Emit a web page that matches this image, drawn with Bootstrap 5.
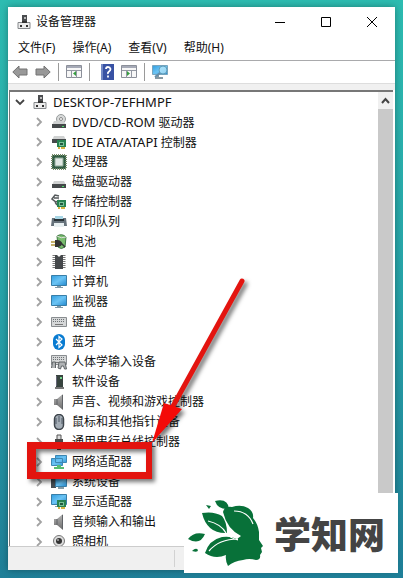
<!DOCTYPE html>
<html lang="zh-CN">
<head>
<meta charset="utf-8">
<meta name="viewport" content="width=device-width, initial-scale=1">
<title>设备管理器</title>
<link href="https://cdn.jsdelivr.net/npm/bootstrap@5.3.0/dist/css/bootstrap.min.css" rel="stylesheet">
<style>
body{font:12px/20px "Noto Sans","Noto Sans CJK SC",sans-serif;color:#111;background:linear-gradient(#2dbcb1,#27a4a9 50%,#1f7f98)}
.desktop{padding:7px 8px 8px}
.win{box-shadow:0 0 7px #0005}
.plain{border:0;background:none;padding:0;color:inherit;line-height:20px}
.titlebar{height:29px;padding-left:8px}
.titlebar h1{font-size:12px;font-weight:400;line-height:20px;margin:0}
.winbtn{width:46px;height:29px}
.menubar{height:25px;padding:0 10px 1px;gap:17px;border-bottom:1px solid #a9aaac}
.tools{height:22px;padding-left:4px;gap:7px}
.tools svg{display:block}
.sep{width:1px;height:18px;background:#9a9a9a}
.strip{height:7px;background:#f0f0f0;border-top:1px solid #ddd}
.treebox{border-top:2px solid #777;border-left:1px solid #777;margin:0 2px 0 1px}
.tree{font-size:12px;overflow:hidden}
.tree ul ul{padding-left:19px}
.item{height:20px;gap:5px;padding-left:3px;white-space:nowrap}
.item svg{flex:none}
.latin{font-size:13px}
.twist{width:14px;height:20px;display:flex;align-items:center;justify-content:center}
.scroll{width:15px;background:#c9c9c9}
.scroll button{height:17px;width:15px;background:#f0f0f0;display:flex;align-items:center;justify-content:center}
.status{height:24px;background:#f0f0f0;border-top:1px solid #ccc}
.status div{width:167px;border-right:1px solid #d2d2d2;height:17px;margin-top:3px}
.marks{left:0;top:0;pointer-events:none;filter:drop-shadow(3px 3px 2px #0008)}
.brand{right:5px;bottom:5px;width:214px;height:80px;padding-left:4px;gap:8px}
.brand strong{font:900 37px/40px "Noto Sans CJK SC",sans-serif;color:#444}
</style>
<script src="https://cdn.jsdelivr.net/npm/bootstrap@5.3.0/dist/js/bootstrap.bundle.min.js"></script>
</head>
<body>
<svg width="0" height="0" class="position-absolute" aria-hidden="true">
<defs>
<linearGradient id="blue" x2="1" y2="1"><stop stop-color="#2f9de0"/><stop offset=".5" stop-color="#6cc4f4"/><stop offset="1" stop-color="#2389cf"/></linearGradient>
<linearGradient id="gray" x2="0" y2="1"><stop stop-color="#b5b5b5"/><stop offset="1" stop-color="#6c6c6c"/></linearGradient>
</defs>
<symbol id="chev" viewBox="0 0 8 10"><path d="M2 1l4 4-4 4" fill="none" stroke="#a2a2a2" stroke-width="1.8"/></symbol>
<symbol id="pc" viewBox="0 0 16 16"><path d="M6 1h5v8H6z" fill="#4b4d50"/><path d="M8 3h2v2H8z" fill="#bbb"/><path d="M2 8.500h12v6H2z" fill="#ececec" stroke="#85888b"/><path d="M4 11h2v2H4zm6 0h2v2h-2zM6 7h5v2H6z" fill="#333"/></symbol>
<symbol id="drive" viewBox="0 0 16 16"><path d="M3 7h10l2 4H1z" fill="#d0d2d2"/><path d="M1 10h14v4H1z" fill="#45494b"/><path d="M11 12h2v1h-2z" fill="#4ddc69"/></symbol>
<symbol id="card" viewBox="0 0 16 16"><path d="M6 6h9v7H6z" fill="#278250"/><path d="M8 8h5v4H8z" fill="#76c297"/><path d="M9 9h3v2H9z" fill="#235a40"/><path d="M7 13h2v2H7zm3 0h4v2h-4z" fill="#d2b443"/></symbol>
<symbol id="monitor" viewBox="0 0 16 16"><path d="M.5 1.500h15v10H.5z" fill="url(#blue)" stroke="#397fa8"/><path d="M6 12h4v1h2v1H4v-1h2z" fill="#829aa7"/></symbol>
<symbol id="keys" viewBox="0 0 16 16"><path d="M.5 3.500h15v9H.5z" fill="#d5d7d8" stroke="#898d90"/><path d="M2 5.500h12M2 7.500h12" stroke="#6d7275" stroke-dasharray="1 1"/><path d="M4 10.500h8" stroke="#777"/></symbol>
<symbol id="speaker" viewBox="0 0 16 16"><path d="M3 5h3l6-5v16l-6-5H3z" fill="url(#gray)"/><path d="M6 5v6M11.500 1v14" stroke="#606367"/></symbol>
<symbol id="panel" viewBox="0 0 16 14"><path d="M.5.500h15v12H.5z" fill="#f7f7f7" stroke="#8b8f99"/><path d="M1 1h14v2H1z" fill="#a6aab7"/><path d="M1 5.500h14M5.500 5v8M10.500 5v8" stroke="#9498a3"/></symbol>
</svg>
<div class="desktop position-relative vh-100 d-flex flex-column">
<main class="win bg-white d-flex flex-column flex-grow-1 overflow-hidden">
<header class="titlebar d-flex align-items-center justify-content-between flex-shrink-0">
<div class="d-flex align-items-center gap-1"><svg width="16" height="16"><use href="#pc"/></svg><h1>设备管理器</h1></div>
<div class="d-flex">
<button class="plain winbtn" aria-label="最小化"><svg width="10" height="10"><path d="M0 5.500h10" stroke="#000"/></svg></button><button class="plain winbtn" aria-label="最大化"><svg width="10" height="10"><path d="M.5.500h9v9h-9z" fill="none" stroke="#000"/></svg></button><button class="plain winbtn" aria-label="关闭"><svg width="10" height="10"><path d="M0 0l10 10M10 0L0 10" stroke="#000"/></svg></button>
</div>
</header>
<nav class="menubar d-flex align-items-center flex-shrink-0"><button class="plain">文件(F)</button><button class="plain">操作(A)</button><button class="plain">查看(V)</button><button class="plain">帮助(H)</button></nav>
<div class="tools d-flex align-items-center flex-shrink-0">
<button class="plain" aria-label="后退"><svg width="16" height="14"><path d="M.8 7L7 1v3h8v6H7v3z" fill="#999" stroke="#727272"/></svg></button>
<button class="plain" aria-label="前进"><svg width="16" height="14"><path d="M15.200 7L9 1v3H1v6h8v3z" fill="#999" stroke="#727272"/></svg></button>
<span class="sep"></span>
<button class="plain" aria-label="显示树"><svg width="16" height="14"><use href="#panel"/><path d="M10 6v5L7 8.500z" fill="#369d3f"/></svg></button>
<span class="sep"></span>
<button class="plain ms-1" aria-label="帮助"><svg width="13" height="16"><path d="M0 0h13v16H0z" fill="#3852a4"/><path d="M0 0h2v16H0z" fill="#7389c5"/><path d="M5 5q0-2 2-2t2.500 2Q9.500 6.500 8 7.500T7 10M7 11.500v2" fill="none" stroke="#fff" stroke-width="1.800"/></svg></button>
<button class="plain" aria-label="操作窗格"><svg width="16" height="14"><use href="#panel"/><path d="M6 6v5l3-2.500z" fill="#369d3f"/></svg></button>
<span class="sep"></span>
<button class="plain" aria-label="扫描硬件改动"><svg width="17" height="16"><path d="M.5 1.500h15v9H.5z" fill="url(#blue)" stroke="#78a5be"/><path d="M3 14h8M6 11v3" stroke="#8799a3" stroke-width="2"/><circle cx="11" cy="6" r="4" fill="#b6e6fac0" stroke="#5d9dbc"/><path d="M8 9l-5 4" stroke="#648eaa" stroke-width="2"/></svg></button>
</div>
<div class="strip flex-shrink-0"></div>
<div class="treebox d-flex flex-grow-1 overflow-hidden">
<div class="tree flex-grow-1">
<ul class="list-unstyled mb-0"><li>
<div class="item d-flex align-items-center latin"><button class="plain twist" aria-label="折叠"><svg width="10" height="8"><path d="M1 2l4 4 4-4" fill="none" stroke="#444" stroke-width="1.800"/></svg></button><svg width="16" height="16"><use href="#pc"/></svg><span>DESKTOP-7EFHMPF</span></div>
<ul class="list-unstyled mb-0">
<li class="item d-flex align-items-center"><button class="plain twist" aria-label="展开"><svg width="8" height="10"><use href="#chev"/></svg></button><svg width="16" height="16"><circle cx="10" cy="5" r="4.500" fill="#d9dbdb" stroke="#989c9c"/><circle cx="10" cy="5" r="1.500" fill="#fff" stroke="#888"/><use href="#drive"/></svg><span><span class="latin">DVD/CD-ROM</span> 驱动器</span></li>
<li class="item d-flex align-items-center"><button class="plain twist" aria-label="展开"><svg width="8" height="10"><use href="#chev"/></svg></button><svg width="16" height="16"><use href="#drive" y="-5"/><use href="#card"/></svg><span><span class="latin">IDE ATA/ATAPI</span> 控制器</span></li>
<li class="item d-flex align-items-center"><button class="plain twist" aria-label="展开"><svg width="8" height="10"><use href="#chev"/></svg></button><svg width="16" height="16"><path d="M1 1h14v14H1z" fill="#315c43" stroke="#748a69" stroke-width="2" stroke-dasharray="1 1"/><path d="M2 2h12v12H2z" fill="#315c43"/><path d="M4 4h8v8H4z" fill="#e1e9e4" stroke="#91aa99"/></svg><span>处理器</span></li>
<li class="item d-flex align-items-center"><button class="plain twist" aria-label="展开"><svg width="8" height="10"><use href="#chev"/></svg></button><svg width="16" height="16"><use href="#drive"/></svg><span>磁盘驱动器</span></li>
<li class="item d-flex align-items-center"><button class="plain twist" aria-label="展开"><svg width="8" height="10"><use href="#chev"/></svg></button><svg width="16" height="16"><path d="M8 2L4 1 1 5l4 3 3-2M3 4h5M4 8l2 3" fill="none" stroke="#555a5c" stroke-width="1.500"/><use href="#card"/></svg><span>存储控制器</span></li>
<li class="item d-flex align-items-center"><button class="plain twist" aria-label="展开"><svg width="8" height="10"><use href="#chev"/></svg></button><svg width="16" height="16"><path d="M1 4h14l1 8H0z" fill="#66727b"/><path d="M4 2h8v4H4z" fill="#a8d6e5"/><path d="M3 6h10" stroke="#273034" stroke-width="2"/><path d="M3 9h10v4H3z" fill="#e8f0f2"/></svg><span>打印队列</span></li>
<li class="item d-flex align-items-center"><button class="plain twist" aria-label="展开"><svg width="8" height="10"><use href="#chev"/></svg></button><svg width="16" height="16"><path d="M6 2q5-3 9 1l-1 10q-4 3-7 0z" fill="#79bd6e" stroke="#3f7842"/><path d="M6 2q4 3 9 1" stroke="#ddd" fill="none"/><path d="M0 8h4M0 11h4" stroke="#b3993c" stroke-width="1.500"/><path d="M4 6h3q4 1 4 3.500T7 13H4z" fill="#333"/><path d="M10 9l4 4" stroke="#333" stroke-width="1.500"/></svg><span>电池</span></li>
<li class="item d-flex align-items-center"><button class="plain twist" aria-label="展开"><svg width="8" height="10"><use href="#chev"/></svg></button><svg width="16" height="16"><path d="M3 1v14M13 1v14" stroke="#777" stroke-width="3" stroke-dasharray="1 1"/><path d="M4 1h2l2 2 2-2h2v14H4z" fill="#45484b"/></svg><span>固件</span></li>
<li class="item d-flex align-items-center"><button class="plain twist" aria-label="展开"><svg width="8" height="10"><use href="#chev"/></svg></button><svg width="16" height="16"><use href="#monitor"/></svg><span>计算机</span></li>
<li class="item d-flex align-items-center"><button class="plain twist" aria-label="展开"><svg width="8" height="10"><use href="#chev"/></svg></button><svg width="16" height="16"><use href="#monitor"/></svg><span>监视器</span></li>
<li class="item d-flex align-items-center"><button class="plain twist" aria-label="展开"><svg width="8" height="10"><use href="#chev"/></svg></button><svg width="16" height="16"><use href="#keys"/></svg><span>键盘</span></li>
<li class="item d-flex align-items-center"><button class="plain twist" aria-label="展开"><svg width="8" height="10"><use href="#chev"/></svg></button><svg width="16" height="16"><rect x="2" width="12" height="16" rx="6" fill="#087bd1"/><path d="M5 5l6 6-3 2.500v-11L11 5l-6 6" fill="none" stroke="#fff" stroke-width="1.200"/></svg><span>蓝牙</span></li>
<li class="item d-flex align-items-center"><button class="plain twist" aria-label="展开"><svg width="8" height="10"><use href="#chev"/></svg></button><svg width="16" height="16"><use href="#keys" y="-2"/><path d="M.5 14l1-6h3v6M7 14l1-6h6l1.500 7h-2l-1-3h-2l-1 3z" fill="#b0b3b5" stroke="#5f6467"/></svg><span>人体学输入设备</span></li>
<li class="item d-flex align-items-center"><button class="plain twist" aria-label="展开"><svg width="8" height="10"><use href="#chev"/></svg></button><svg width="16" height="16"><path d="M5 1h7v12H5z" fill="#38443f"/><path d="M4 13h9v2H4z" fill="#777"/><path d="M9 3h2v2H9z" fill="#73d38b"/><path d="M5.500 2v10" stroke="#667"/></svg><span>软件设备</span></li>
<li class="item d-flex align-items-center"><button class="plain twist" aria-label="展开"><svg width="8" height="10"><use href="#chev"/></svg></button><svg width="16" height="16"><use href="#speaker"/></svg><span>声音、视频和游戏控制器</span></li>
<li class="item d-flex align-items-center"><button class="plain twist" aria-label="展开"><svg width="8" height="10"><use href="#chev"/></svg></button><svg width="16" height="16"><rect x="3.500" y=".5" width="9" height="15" rx="4.500" fill="#a4adb6" stroke="#3e454c" stroke-width="1.500"/><path d="M8 2v6M5 4v6M11 4v6" stroke="#505b67"/></svg><span>鼠标和其他指针设备</span></li>
<li class="item d-flex align-items-center"><button class="plain twist" aria-label="展开"><svg width="8" height="10"><use href="#chev"/></svg></button><svg width="16" height="16"><path d="M6 1h4v5H6z" fill="#ddd" stroke="#555"/><path d="M4 5h8v6l-2 2v3H6v-3l-2-2z" fill="#4b4b4b"/></svg><span>通用串行总线控制器</span></li>
<li class="item d-flex align-items-center"><button class="plain twist" aria-label="展开"><svg width="8" height="10"><use href="#chev"/></svg></button><svg width="16" height="16"><path d="M4.500 1.500h11v7h-11zM.5 4.500h11v7H.5z" fill="url(#blue)" stroke="#3d88b4"/><path d="M6 11h4v2h3v2H3v-2h3z" fill="#57bd72"/></svg><span>网络适配器</span></li>
<li class="item d-flex align-items-center"><button class="plain twist" aria-label="展开"><svg width="8" height="10"><use href="#chev"/></svg></button><svg width="16" height="16"><path d="M0 2h5v12H0z" fill="#454e54"/><path d="M4.500 4.500h11v8h-11z" fill="url(#blue)" stroke="#397fa8"/><path d="M7 13h6v2H7z" fill="#839aa6"/></svg><span>系统设备</span></li>
<li class="item d-flex align-items-center"><button class="plain twist" aria-label="展开"><svg width="8" height="10"><use href="#chev"/></svg></button><svg width="16" height="16"><use href="#monitor" y="-1"/><use href="#card"/></svg><span>显示适配器</span></li>
<li class="item d-flex align-items-center"><button class="plain twist" aria-label="展开"><svg width="8" height="10"><use href="#chev"/></svg></button><svg width="16" height="16"><use href="#speaker"/></svg><span>音频输入和输出</span></li>
<li class="item d-flex align-items-center"><button class="plain twist" aria-label="展开"><svg width="8" height="10"><use href="#chev"/></svg></button><svg width="16" height="16"><circle cx="8" cy="7" r="5.500" fill="#ddd" stroke="#777"/><circle cx="8" cy="7" r="3" fill="#333"/><circle cx="7" cy="6" r="1" fill="#aaa"/><path d="M4 14h8" stroke="#999" stroke-width="2"/></svg><span>照相机</span></li>
</ul></li></ul>
</div>
<div class="scroll flex-shrink-0"><button class="plain" aria-label="向上滚动"><svg width="9" height="8"><path d="M1 6l3.500-4L8 6" fill="none" stroke="#444" stroke-width="2"/></svg></button></div>
</div>
<footer class="status flex-shrink-0"><div></div></footer>
</main>
<svg class="marks position-absolute" width="260" height="490" viewBox="0 0 260 490" aria-hidden="true"><path d="M27 442h125v37H27zM36 449v23h110v-23z" fill="#e3140f" fill-rule="evenodd"/><path d="M242 281L172 408" stroke="#e3140f" stroke-width="5" stroke-linecap="round"/><path d="M152 443l12-40 18 6z" fill="#f40b08"/></svg>
<aside class="brand position-absolute bg-white d-flex align-items-center">
<svg class="flex-shrink-0" width="78" height="72" viewBox="0 0 78 72" aria-hidden="true"><g fill="#087139"><path d="M44 10q9-3 16 1 6 4 5 10 5 6 6 14l0 8 4 6-2 2 1 4-2 3q1 5-4 5-7-2-13 0-9 1-15 6-3-6-2-11-11 5-21-2 4-13 17-16 9-1 15 2l4-3q-14-7-18-24 1-6 9-5z"/><path d="M27 4q13-3 14 8-11 1-14-8zM14 16q12-2 20 3 5 6 5 17-20 1-25-20zM0 42q6-8 17-5-5 12-17 5zM18 8l5 1-2 3zM4 54q4-4 6-1 0 3-6 1z"/></g><path d="M20 24q13 3 18 12 4 5 12 7M21 54q10-12 29-12M46 14q14 0 19 13" fill="none" stroke="#fff" stroke-width="1.200"/></svg>
<strong>学知网</strong>
</aside>
</div>
</body>
</html>
